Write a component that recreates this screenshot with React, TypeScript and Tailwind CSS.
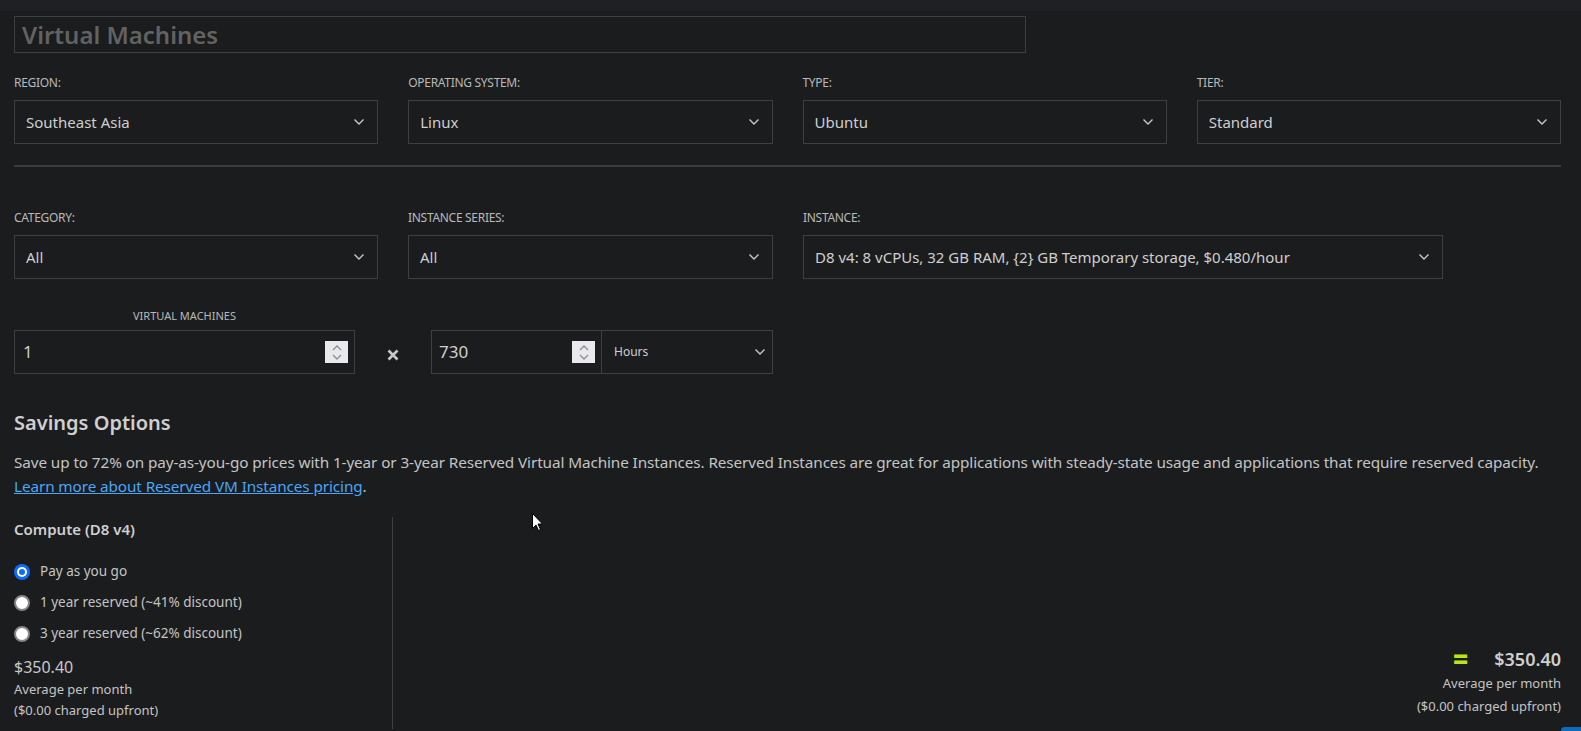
import React from 'react';

const font = { fontFamily: '"Segoe UI", "Noto Sans", sans-serif' };

function Chevron() {
  return (
    <svg width="12" height="8" viewBox="0 0 12 8" className="shrink-0">
      <polyline points="1.5,1.5 6,6 10.5,1.5" fill="none" stroke="#c8c8c8" strokeWidth="1.4" />
    </svg>
  );
}

function Spinner() {
  return (
    <div className="w-[23px] h-[22px] bg-[#e9e9ed] flex flex-col items-center justify-center gap-[3px]">
      <svg width="10" height="6" viewBox="0 0 10 6">
        <polyline points="1,5 5,1 9,5" fill="none" stroke="#8d8d93" strokeWidth="1.3" />
      </svg>
      <svg width="10" height="6" viewBox="0 0 10 6">
        <polyline points="1,1 5,5 9,1" fill="none" stroke="#8d8d93" strokeWidth="1.3" />
      </svg>
    </div>
  );
}

function Select({ label, value, className = '' }: { label: string; value: string; className?: string }) {
  return (
    <div className={className}>
      <div className="text-[12px] text-[#b9b9b9] tracking-[-0.3px] leading-4 h-4">{label}</div>
      <div className="mt-[9px] h-[44px] border border-[#3e3f42] flex items-center justify-between pl-[11px] pr-[12px] text-[15px] text-[#cfcfcf]">
        <span>{value}</span>
        <Chevron />
      </div>
    </div>
  );
}

function Radio({ checked, label }: { checked?: boolean; label: string }) {
  return (
    <div className="flex items-center gap-[10px] h-[31px]">
      {checked ? (
        <div className="w-[16px] h-[16px] rounded-full bg-[#0b6cfe] flex items-center justify-center">
          <div className="w-[10px] h-[10px] rounded-full bg-white flex items-center justify-center">
            <div className="w-[6px] h-[6px] rounded-full bg-[#0b6cfe]" />
          </div>
        </div>
      ) : (
        <div className="w-[16px] h-[16px] rounded-full bg-white border-2 border-[#85858b]" />
      )}
      <span className="text-[13.5px] text-[#c4c4c4]">{label}</span>
    </div>
  );
}

export default function App() {
  return (
    <div style={font} className="relative min-h-[731px] bg-[#1b1c1e] text-[#cfcfcf] overflow-hidden">
      <div className="h-[11px] bg-[#1f2023]" />

      <div className="pl-[14px] pr-[20px]">
        {/* title */}
        <div className="mt-[5px] w-[1012px] h-[37px] border border-[#3e3f42] flex items-center pl-[7px] text-[24px] font-semibold text-[#626262]">
          Virtual Machines
        </div>

        {/* top selects */}
        <div className="mt-[22px] grid grid-cols-4 gap-[30px]">
          <Select label="REGION:" value="Southeast Asia" />
          <Select label="OPERATING SYSTEM:" value="Linux" />
          <Select label="TYPE:" value="Ubuntu" />
          <Select label="TIER:" value="Standard" />
        </div>

        <div className="mt-[21px] h-[2px] bg-[#3a3b3e]" />

        {/* instance selects */}
        <div className="mt-[43px] flex gap-[30px]">
          <Select label="CATEGORY:" value="All" className="w-[364px]" />
          <Select label="INSTANCE SERIES:" value="All" className="w-[365px]" />
          <Select label="INSTANCE:" value="D8 v4: 8 vCPUs, 32 GB RAM, {2} GB Temporary storage, $0.480/hour" className="w-[640px]" />
        </div>

        {/* quantities */}
        <div className="mt-[29px] flex items-end">
          <div className="w-[341px]">
            <div className="text-center text-[11px] text-[#b9b9b9] leading-4 h-4">VIRTUAL MACHINES</div>
            <div className="mt-[6px] h-[44px] border border-[#3e3f42] flex items-center justify-between pl-[8px] pr-[6px] text-[17px] text-[#cfcfcf]">
              <span>1</span>
              <Spinner />
            </div>
          </div>
          <div className="w-[76px] h-[44px] flex items-center justify-center pt-[6px]">
            <svg width="12" height="12" viewBox="0 0 12 12">
              <path d="M1.5 1.5 L10.5 10.5 M10.5 1.5 L1.5 10.5" stroke="#c8c8c8" strokeWidth="2.6" />
            </svg>
          </div>
          <div className="w-[171px] h-[44px] border border-[#3e3f42] flex items-center justify-between pl-[7px] pr-[6px] text-[17px] text-[#cfcfcf]">
            <span>730</span>
            <Spinner />
          </div>
          <div className="w-[171px] h-[44px] border border-l-0 border-[#3e3f42] flex items-center justify-between pl-[12px] pr-[6px] text-[12px] text-[#cfcfcf]">
            <span>Hours</span>
            <Chevron />
          </div>
        </div>

        {/* savings */}
        <h2 className="mt-[35px] text-[20px] font-semibold text-[#cfcfcf] leading-7">Savings Options</h2>
        <p className="mt-[13px] text-[15.3px] tracking-[-0.1px] leading-[24px] text-[#c4c4c4]">
          Save up to 72% on pay-as-you-go prices with 1-year or 3-year Reserved Virtual Machine Instances. Reserved Instances are great for applications with steady-state usage and applications that require reserved capacity.
          <br />
          <a href="#" className="text-[#4aa6f7] underline">Learn more about Reserved VM Instances pricing</a>.
        </p>

        <div className="mt-[19px] flex">
          <div className="w-[379px] border-r border-[#3e3f42] pt-[2px] pb-[8px]">
            <div className="text-[15px] font-semibold text-[#cfcfcf] leading-5">Compute (D8 v4)</div>
            <div className="mt-[17px]">
              <Radio checked label="Pay as you go" />
              <Radio label="1 year reserved (~41% discount)" />
              <Radio label="3 year reserved (~62% discount)" />
            </div>
            <div className="mt-[6px] text-[16px] text-[#c8c8c8] leading-6">$350.40</div>
            <div className="text-[13px] text-[#c4c4c4] leading-[21px]">Average per month</div>
            <div className="text-[13px] text-[#c4c4c4] leading-[21px]">($0.00 charged upfront)</div>
          </div>

          <div className="flex-1 flex flex-col items-end justify-end pb-[11px]">
            <div className="flex items-center">
              <span className="text-[26px] font-black text-[#b9e61a] leading-6">=</span>
              <span className="ml-[26px] text-[18px] font-semibold text-[#cfcfcf] leading-6">$350.40</span>
            </div>
            <div className="mt-[1px] text-[13px] text-[#c4c4c4] leading-[23px]">Average per month</div>
            <div className="text-[13px] text-[#c4c4c4] leading-[23px]">($0.00 charged upfront)</div>
          </div>
        </div>
      </div>

      {/* partial button at bottom edge */}
      <div className="absolute right-0 top-[727px] w-[20px] h-[10px] rounded-tl-[4px] bg-[#0f6cbd]" />

      {/* mouse pointer */}
      <svg className="absolute left-[532px] top-[513px]" width="12" height="19" viewBox="0 0 12 19">
        <path d="M0.5 0.5 L0.5 15.5 L4 12 L6.5 17.5 L8.5 16.5 L6 11 L10.5 11 Z" fill="#ffffff" stroke="#000000" strokeWidth="1" />
      </svg>
    </div>
  );
}
